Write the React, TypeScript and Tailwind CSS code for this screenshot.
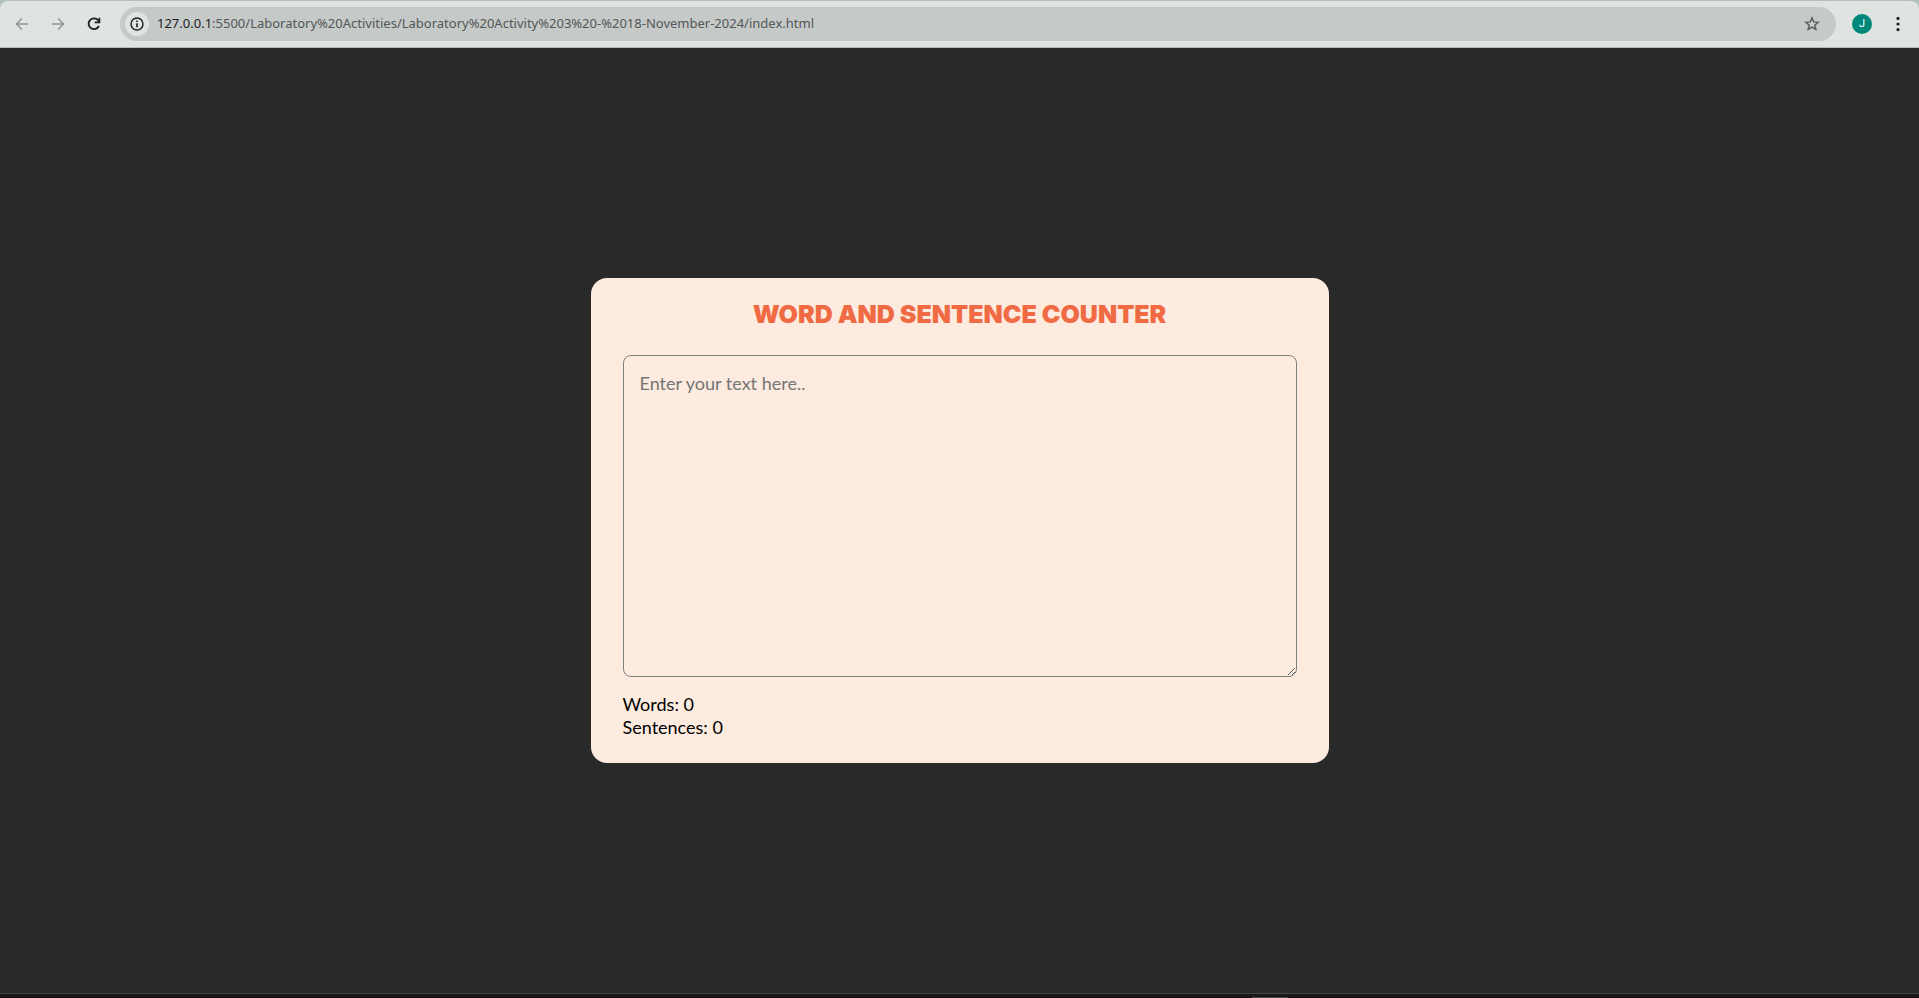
import { useState } from "react";

function Toolbar() {
  return (
    <header className="bg-[#afbfba] pt-px">
      <div className="flex h-[47px] items-center rounded-t-lg border-b border-[#b0bebb] bg-[#dfe3e2] pr-[11px] pl-3">
        <button aria-label="Back" className="grid h-5 w-5 place-items-center text-[#939897]">
          <svg width="14" height="14" viewBox="0 0 14 14" fill="none" stroke="currentColor" strokeWidth="1.6">
            <path d="M13 7H2M7 1.5 1.5 7 7 12.5" />
          </svg>
        </button>
        <button aria-label="Forward" className="ml-4 grid h-5 w-5 place-items-center text-[#939897]">
          <svg width="14" height="14" viewBox="0 0 14 14" fill="none" stroke="currentColor" strokeWidth="1.6">
            <path d="M1 7h11M7 1.5 12.5 7 7 12.5" />
          </svg>
        </button>
        <button aria-label="Reload" className="ml-4 grid h-5 w-5 place-items-center text-[#1d1f1f]">
          <svg width="14" height="14" viewBox="0 0 14 14" fill="none" stroke="currentColor" strokeWidth="1.8">
            <path d="M11.9 9A5.4 5.4 0 1 1 11.2 3.3L12.5 4.7" />
            <path d="M12.4 .8V5.4H7.8" />
          </svg>
        </button>
        <div className="ml-4 flex h-[34px] min-w-0 flex-1 items-center rounded-full bg-[#c5c9c8] pr-4 pl-[5px]">
          <button aria-label="Site information" className="grid h-6 w-6 place-items-center rounded-full bg-[#dfe3e2] text-[#1d1f1f]">
            <svg width="14" height="14" viewBox="0 0 14 14" fill="none" stroke="currentColor" strokeWidth="1.4">
              <circle cx="7" cy="7" r="6" />
              <path d="M7 6.2v4M7 3.5v1.6" strokeWidth="1.6" />
            </svg>
          </button>
          <a
            href="#page"
            className="ml-2 min-w-0 flex-1 truncate font-['Noto_Sans',sans-serif] text-[13px] text-[#535756]"
          >
            <span className="text-[#1d1f1f]">127.0.0.1</span>
            :5500/Laboratory%20Activities/Laboratory%20Activity%203%20-%2018-November-2024/index.html
          </a>
          <button aria-label="Bookmark this page" className="text-[#5b5f5e]">
            <svg width="16" height="16" viewBox="0 0 16 16" fill="none" stroke="currentColor" strokeWidth="1.5">
              <path d="m8 1.9 1.7 4 4.4.4-3.3 2.9 1 4.2L8 11.1l-3.8 2.3 1-4.2-3.3-2.9 4.4-.4z" />
            </svg>
          </button>
        </div>
        <button
          aria-label="Profile"
          className="ml-4 grid h-5 w-5 place-items-center rounded-full bg-[#00897b] font-['Roboto',sans-serif] text-[11px] text-white"
        >
          J
        </button>
        <button aria-label="Menu" className="ml-4 grid h-5 w-5 place-items-center text-[#1d1f1f]">
          <svg width="4" height="16" viewBox="0 0 4 16" fill="currentColor">
            <circle cx="2" cy="2.4" r="1.6" />
            <circle cx="2" cy="8" r="1.6" />
            <circle cx="2" cy="13.6" r="1.6" />
          </svg>
        </button>
      </div>
    </header>
  );
}

function Counter() {
  const [text, setText] = useState("");
  const words = text.split(/\s+/).filter(Boolean).length;
  const sentences = text.split(/[.!?]+/).filter((part) => part.trim()).length;

  return (
    <section className="w-full max-w-[738px] rounded-2xl bg-[#fcebde] px-8 py-6 font-['Lato',sans-serif] text-black">
      <h1 className="mb-7 text-center font-['Inter',sans-serif] text-[25px] leading-[25px] font-black text-[#f06a43] uppercase">
        Word and Sentence Counter
      </h1>
      <textarea
        aria-label="Text to count"
        placeholder="Enter your text here.."
        value={text}
        onChange={(event) => setText(event.target.value)}
        className="block h-[322px] w-full rounded-lg border border-[#808080] p-4 text-lg leading-[23px] outline-none placeholder:text-[#757575]"
      />
      <div className="mt-4 text-lg leading-[23px]">
        <p>Words: {words}</p>
        <p>Sentences: {sentences}</p>
      </div>
    </section>
  );
}

export default function App() {
  return (
    <div className="flex min-h-screen flex-col bg-[#292929]">
      <Toolbar />
      <main id="page" className="flex flex-1 items-center justify-center">
        <Counter />
      </main>
      <footer className="flex h-[5px] flex-col items-center border-t border-[#444444] bg-[#191919]">
        <div className="mt-auto flex h-px w-full justify-center bg-[#160a10]">
          <div className="ml-[620px] h-px w-9 bg-[#444444]" />
        </div>
      </footer>
    </div>
  );
}
